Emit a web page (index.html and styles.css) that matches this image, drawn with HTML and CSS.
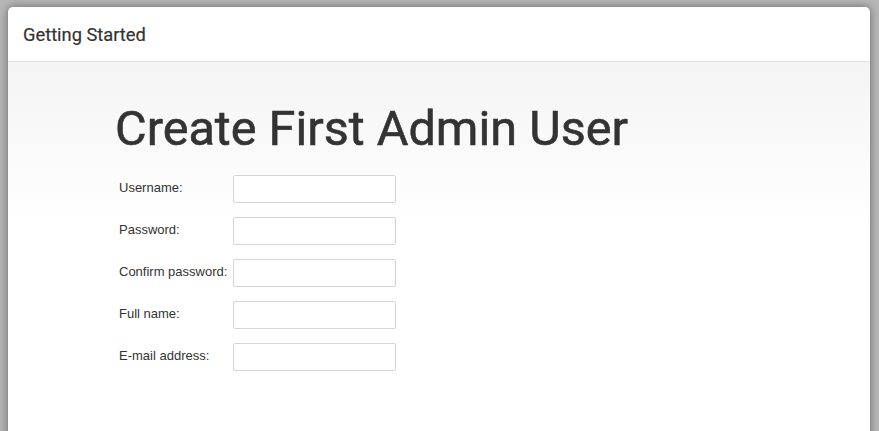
FILE: index.html
```html
<!DOCTYPE html>
<html lang="en">
<head>
    <meta charset="UTF-8">
    <meta name="viewport" content="width=device-width, initial-scale=1.0">
    <title>Getting Started</title>
    <link rel="stylesheet" href="styles.css">
</head>
<body>
    <div class="dialog">
        <div class="dialog-header">Getting Started</div>
        <div class="dialog-body">
            <h1>Create First Admin User</h1>
            <form class="user-form">
                <div class="form-row">
                    <label for="username">Username:</label>
                    <input type="text" id="username">
                </div>
                <div class="form-row">
                    <label for="password1">Password:</label>
                    <input type="password" id="password1">
                </div>
                <div class="form-row">
                    <label for="password2">Confirm password:</label>
                    <input type="password" id="password2">
                </div>
                <div class="form-row">
                    <label for="fullname">Full name:</label>
                    <input type="text" id="fullname">
                </div>
                <div class="form-row">
                    <label for="email">E-mail address:</label>
                    <input type="text" id="email">
                </div>
            </form>
        </div>
    </div>
</body>
</html>
```

FILE: styles.css
```css
html, body { margin: 0; height: 100%; overflow: hidden; }
body { background: #b6b6b6; font-family: Roboto, "Noto Sans", sans-serif; color: #333; }
.dialog { margin: 7px 9px 0 8px; height: 450px; background: #fff; border-radius: 5px 5px 0 0; box-shadow: 0 0 8px rgba(0,0,0,0.45); overflow: hidden; }
.dialog-header { height: 54px; line-height: 56px; padding-left: 15px; font-size: 18.3px; font-weight: 400; -webkit-text-stroke: 0.2px #333; border-bottom: 1px solid #e4e4e4; }
.dialog-body { padding: 40px 0 0 107px; background: linear-gradient(#f4f4f4, #fff 160px); height: 100%; }
h1 { margin: 0 0 19px 0; font-size: 48.6px; line-height: 54px; font-weight: 400; color: #333; -webkit-text-stroke: 0.6px #333; }
.user-form { padding-left: 4px; font-family: "Liberation Sans", Arial, sans-serif; font-size: 13px; }
.form-row { display: flex; height: 28px; margin-bottom: 14px; }
.form-row label { width: 114px; padding-top: 4px; line-height: 18px; color: #333; }
.form-row input { width: 163px; height: 28px; box-sizing: border-box; border: 1px solid #d4d4d4; border-radius: 2px; background: #fff; padding: 2px 6px; font-size: 13px; }
```
